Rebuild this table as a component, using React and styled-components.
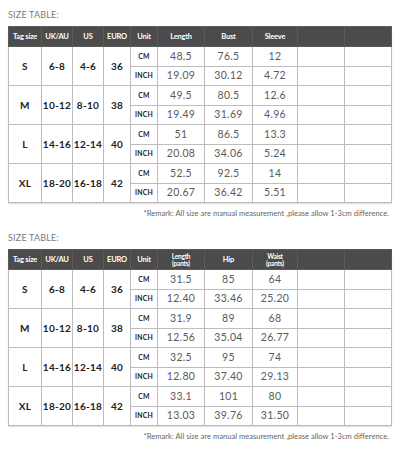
import React from 'react';
import styled, { createGlobalStyle } from 'styled-components';

const GlobalStyle = createGlobalStyle`
  body {
    margin: 0;
    background: #fff;
    font-family: Lato, "Open Sans", sans-serif;
  }
`;

const Page = styled.div`
  padding: 9px 9px 0 8px;
  width: 400px;
  box-sizing: border-box;
`;

const Section = styled.section`
  margin-bottom: 14px;
`;

const Title = styled.div`
  font-size: 9px;
  line-height: 12px;
  color: #7a7a7a;
  letter-spacing: 0.2px;
  margin-bottom: 5px;
`;

const Table = styled.table`
  width: 383px;
  table-layout: fixed;
  border-collapse: collapse;
  border: 1px solid #bdbdbd;
  box-shadow: 0 1px 1px rgba(0, 0, 0, 0.12);
`;

const Head = styled.th`
  background: #4b4b4b;
  color: #fff;
  font-size: ${p => (p.$small ? '6.5px' : '7.5px')};
  line-height: ${p => (p.$small ? '7px' : '9px')};
  font-weight: 700;
  height: 19px;
  padding: 0;
  text-align: center;
  border: 1px solid #5a5a5a;
  letter-spacing: -0.2px;
`;

const Cell = styled.td`
  height: 18.5px;
  padding: 0;
  text-align: center;
  border-left: 1px solid #bdbdbd;
  border-right: 1px solid #bdbdbd;
  border-top: 1px solid ${p => (p.$sub ? '#d6d6d6' : '#bdbdbd')};
  border-bottom: 1px solid #bdbdbd;
  font-size: ${p => (p.$big ? '10px' : p.$unit ? '6.8px' : '10.5px')};
  font-weight: ${p => (p.$big || p.$unit ? 700 : 400)};
  color: ${p => (p.$big || p.$unit ? '#222' : '#5a5a5a')};
  letter-spacing: ${p => (p.$big ? '0.3px' : '0.3px')};
  line-height: 11px;
`;

const Remark = styled.div`
  text-align: right;
  font-size: 7.6px;
  line-height: 10px;
  color: #666;
  margin-top: 5px;
  padding-right: 2px;
`;

const widths = [33, 31, 31, 27, 27, 47, 48, 45, 47, 47];

const sizes = [
  ['S', '6-8', '4-6', '36'],
  ['M', '10-12', '8-10', '38'],
  ['L', '14-16', '12-14', '40'],
  ['XL', '18-20', '16-18', '42'],
];

const tables = [
  {
    heads: [['Length'], ['Bust'], ['Sleeve']],
    rows: [
      [['48.5', '76.5', '12'], ['19.09', '30.12', '4.72']],
      [['49.5', '80.5', '12.6'], ['19.49', '31.69', '4.96']],
      [['51', '86.5', '13.3'], ['20.08', '34.06', '5.24']],
      [['52.5', '92.5', '14'], ['20.67', '36.42', '5.51']],
    ],
  },
  {
    heads: [['Length', '(pants)'], ['Hip'], ['Waist', '(pants)']],
    rows: [
      [['31.5', '85', '64'], ['12.40', '33.46', '25.20']],
      [['31.9', '89', '68'], ['12.56', '35.04', '26.77']],
      [['32.5', '95', '74'], ['12.80', '37.40', '29.13']],
      [['33.1', '101', '80'], ['13.03', '39.76', '31.50']],
    ],
  },
];

const SizeTable = ({ heads, rows }) => (
  <Section>
    <Title>SIZE TABLE:</Title>
    <Table>
      <colgroup>
        {widths.map((w, i) => (
          <col key={i} style={{ width: w }} />
        ))}
      </colgroup>
      <thead>
        <tr>
          {['Tag size', 'UK/AU', 'US', 'EURO', 'Unit'].map(h => (
            <Head key={h}>{h}</Head>
          ))}
          {heads.map((h, i) => (
            <Head key={i} $small={h.length > 1}>
              {h.map((line, j) => (
                <div key={j}>{line}</div>
              ))}
            </Head>
          ))}
          <Head />
          <Head />
        </tr>
      </thead>
      <tbody>
        {sizes.map((s, i) => (
          <React.Fragment key={s[0]}>
            <tr>
              {s.map((v, j) => (
                <Cell key={j} rowSpan={2} $big>
                  {v}
                </Cell>
              ))}
              <Cell $unit>CM</Cell>
              {rows[i][0].map((v, j) => (
                <Cell key={j}>{v}</Cell>
              ))}
              <Cell />
              <Cell />
            </tr>
            <tr>
              <Cell $unit $sub>INCH</Cell>
              {rows[i][1].map((v, j) => (
                <Cell key={j} $sub>{v}</Cell>
              ))}
              <Cell $sub />
              <Cell $sub />
            </tr>
          </React.Fragment>
        ))}
      </tbody>
    </Table>
    <Remark>*Remark: All size are manual measurement ,please allow 1-3cm difference.</Remark>
  </Section>
);

export default function App() {
  return (
    <Page>
      <GlobalStyle />
      {tables.map((t, i) => (
        <SizeTable key={i} heads={t.heads} rows={t.rows} />
      ))}
    </Page>
  );
}
